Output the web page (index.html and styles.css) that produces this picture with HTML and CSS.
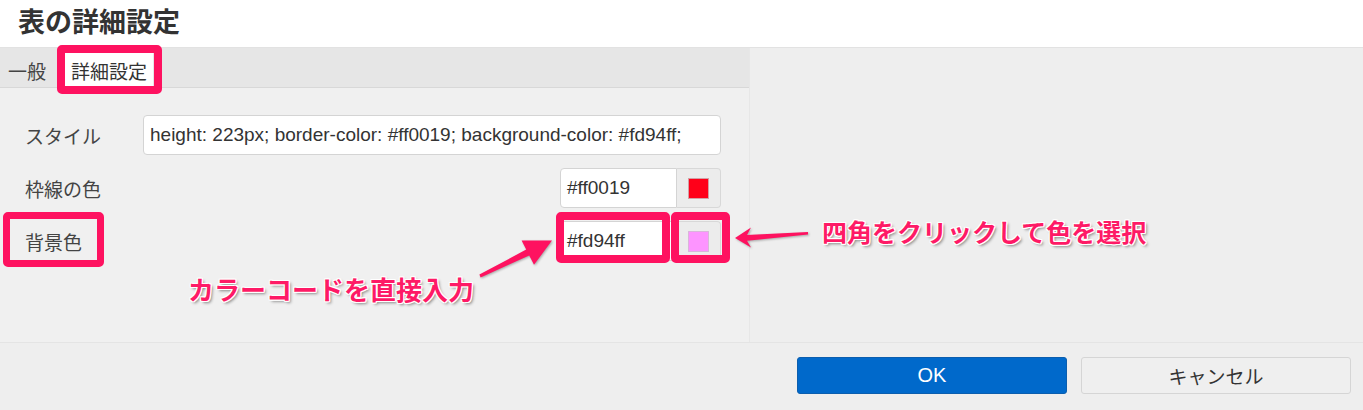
FILE: index.html
```html
<!DOCTYPE html>
<html lang="ja">
<head>
<meta charset="utf-8">
<title>表の詳細設定</title>
<link rel="stylesheet" href="styles.css">
</head>
<body>
<div class="page">
  <header class="hdr"><h1 class="title">表の詳細設定</h1></header>
  <div class="main">
    <section class="panel">
      <nav class="tabs">
        <span class="tab">一般</span>
        <span class="tab active">詳細設定</span>
      </nav>
      <div class="form">
        <div class="row">
          <span class="label">スタイル</span>
          <div class="field">height: 223px; border-color: #ff0019; background-color: #fd94ff;</div>
        </div>
        <div class="row">
          <span class="label">枠線の色</span>
          <div class="color-group">
            <div class="color-text">#ff0019</div>
            <div class="swatch-cell"><span class="swatch swatch-red"></span></div>
          </div>
        </div>
        <div class="row">
          <span class="label">背景色</span>
          <div class="color-group">
            <div class="color-text">#fd94ff</div>
            <div class="swatch-cell"><span class="swatch swatch-pink"></span></div>
          </div>
        </div>
      </div>
    </section>
    <div class="side"></div>
  </div>
  <footer class="foot">
    <button class="btn btn-ok">OK</button>
    <button class="btn btn-cancel">キャンセル</button>
  </footer>

  <div class="overlay">
    <div class="hl hl-tab"></div>
    <div class="hl hl-label"></div>
    <div class="hl hl-input"></div>
    <div class="hl hl-swatch"></div>
    <svg class="arrows" width="1363" height="410" viewBox="0 0 1363 410">
      <polygon class="arrow" points="479.4,274.6 526.2,249.6 521.6,240.4 552,240.6 534,264.8 529.2,255.4 480.6,277.4"/>
      <polygon class="arrow" points="735,238 751,227.5 747,235 808,232 808,234.6 747,240.8 751,247.5"/>
    </svg>
    <div class="note note-code">カラーコードを直接入力</div>
    <div class="note note-pick">四角をクリックして色を選択</div>
  </div>
</div>
</body>
</html>
```

FILE: styles.css
```css
* { box-sizing: border-box; }
html, body { margin: 0; padding: 0; }
body {
  width: 1363px;
  height: 410px;
  overflow: hidden;
  background: #eeeeee;
  font-family: "Noto Sans CJK JP", "Noto Sans", sans-serif;
  color: #444;
}
.page { position: relative; width: 1363px; height: 410px; }

.hdr {
  height: 48px;
  background: #fff;
  border-bottom: 1px solid #e2e2e2;
  padding-left: 18px;
}
.title {
  margin: 0;
  font-size: 27px;
  line-height: 41px;
  font-weight: 700;
  color: #333;
}

.main { display: flex; height: 294px; }
.panel {
  width: 750px;
  background: #f0f0f0;
  border-right: 1px solid #e7e7e7;
}
.side { flex: 1; background: #eeeeee; }

.tabs {
  height: 40px;
  background: #e6e6e6;
  border-bottom: 1px solid #d8d8d8;
  display: flex;
  align-items: flex-end;
}
.tab {
  height: 34px;
  line-height: 36px;
  font-size: 19px;
  color: #444;
  padding: 0 8px;
  margin-right: 11px;
}
.tab.active {
  background: #fff;
  color: #333;
  padding: 0 6px;
}

.form { padding: 27px 28px 0 25px; }
.row {
  display: flex;
  align-items: center;
  height: 40px;
  margin-bottom: 13px;
}
.label {
  width: 118px;
  font-size: 19px;
  color: #444;
}
.field {
  flex: 1;
  height: 40px;
  background: #fff;
  border: 1px solid #d4d4d4;
  border-radius: 4px;
  padding-left: 6px;
  font-family: "Liberation Sans", Arial, sans-serif;
  font-size: 19px;
  line-height: 38px;
  color: #333;
  white-space: nowrap;
  overflow: hidden;
}
.color-group {
  margin-left: auto;
  display: flex;
  height: 40px;
}
.color-text {
  width: 117px;
  background: #fff;
  border: 1px solid #d4d4d4;
  border-radius: 4px 0 0 4px;
  padding-left: 6px;
  font-family: "Liberation Sans", Arial, sans-serif;
  font-size: 19px;
  line-height: 38px;
  color: #333;
}
.swatch-cell {
  width: 44px;
  background: #ececec;
  border: 1px solid #d8d8d8;
  border-left: none;
  border-radius: 0 4px 4px 0;
  display: flex;
  align-items: center;
  justify-content: center;
}
.swatch {
  width: 21px;
  height: 21px;
  border: 1px solid #d3a0a6;
}
.swatch-red { background: #ff0019; }
.swatch-pink { background: #fd94ff; border-color: #d9b6da; }

.foot {
  height: 68px;
  border-top: 1px solid #e4e4e4;
  display: flex;
  justify-content: flex-end;
  align-items: flex-start;
  gap: 14px;
  padding: 14px 12px 0 0;
}
.btn {
  width: 270px;
  height: 37px;
  border-radius: 3px;
  cursor: pointer;
}
.btn-ok {
  background: #0069cb;
  border: 1px solid #0b5eae;
  color: #fff;
  font-family: "Liberation Sans", Arial, sans-serif;
  font-size: 20px;
}
.btn-cancel {
  background: #efefef;
  border: 1px solid #d5d5d5;
  color: #333;
  font-family: "Noto Sans CJK JP", sans-serif;
  font-size: 19px;
}

/* annotation overlay */
.overlay { position: absolute; inset: 0; pointer-events: none; }
.hl {
  position: absolute;
  border: 8px solid #fe1260;
  border-radius: 5px;
}
.hl-tab { left: 57px; top: 45px; width: 105px; height: 49px; }
.hl-label { left: 3px; top: 212px; width: 101px; height: 55px; border-width: 7px; }
.hl-input { left: 556px; top: 212px; width: 114px; height: 51px; }
.hl-swatch { left: 671px; top: 212px; width: 59px; height: 51px; }

.arrows { position: absolute; left: 0; top: 0; }
.arrow {
  fill: #fe1260;
  filter: drop-shadow(1px 1px 1px rgba(0, 0, 0, 0.3));
}

.note {
  position: absolute;
  font-family: "Noto Sans CJK JP", sans-serif;
  font-weight: 700;
  line-height: 1;
  color: #fe1a66;
  white-space: nowrap;
  text-shadow:
    1px 0 0 #fff, -1px 0 0 #fff, 0 1px 0 #fff, 0 -1px 0 #fff,
    1px 1px 0 #fff, -1px -1px 0 #fff, 1px -1px 0 #fff, -1px 1px 0 #fff,
    2px 2px 3px rgba(0, 0, 0, 0.45);
}
.note-code { left: 188px; top: 276px; font-size: 26px; }
.note-pick { left: 822px; top: 219px; font-size: 25px; }
```
